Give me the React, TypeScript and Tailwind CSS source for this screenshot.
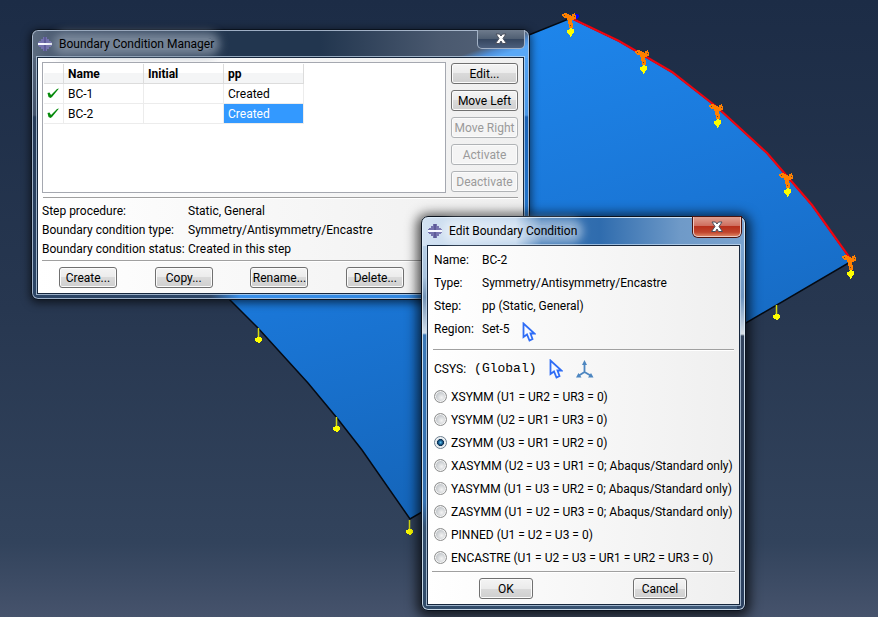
import type { ButtonHTMLAttributes, ReactNode } from "react";

type Point = { x: number; y: number };

const fixedSupports: Point[] = [
  { x: 571, y: 18 },
  { x: 644, y: 55 },
  { x: 718, y: 109 },
  { x: 788, y: 178 },
  { x: 851, y: 260 },
];

const symmetrySupports: Point[] = [
  { x: 258, y: 328 },
  { x: 336, y: 417 },
  { x: 409, y: 520 },
  { x: 776, y: 305 },
];

const conditions = [
  { name: "BC-1", initial: "", step: "Created" },
  { name: "BC-2", initial: "", step: "Created", selected: true },
];

const details = [
  ["Step procedure:", "Static, General"],
  ["Boundary condition type:", "Symmetry/Antisymmetry/Encastre"],
  ["Boundary condition status:", "Created in this step"],
];

const options = [
  "XSYMM (U1 = UR2 = UR3 = 0)",
  "YSYMM (U2 = UR1 = UR3 = 0)",
  "ZSYMM (U3 = UR1 = UR2 = 0)",
  "XASYMM (U2 = U3 = UR1 = 0; Abaqus/Standard only)",
  "YASYMM (U1 = U3 = UR2 = 0; Abaqus/Standard only)",
  "ZASYMM (U1 = U2 = UR3 = 0; Abaqus/Standard only)",
  "PINNED (U1 = U2 = U3 = 0)",
  "ENCASTRE (U1 = U2 = U3 = UR1 = UR2 = UR3 = 0)",
];

function Viewport() {
  return (
    <svg className="absolute top-0 left-0" width="878" height="617" viewBox="0 0 878 617" aria-hidden="true">
      <defs>
        <linearGradient id="face" gradientUnits="userSpaceOnUse" x1="480" y1="30" x2="600" y2="450">
          <stop offset="0" stopColor="#1e86ec" />
          <stop offset="0.5" stopColor="#1a76d6" />
          <stop offset="1" stopColor="#1566bb" />
        </linearGradient>
      </defs>
      <path
        d="M571 18 L619 41 L672 72 L718 108 L767 153 L812 205 L852 261 L410 519 L362 450 L337 418 L308 383 L258 328 L230 300 L120 200 Z"
        fill="url(#face)"
        stroke="#050a12"
        strokeWidth="1.5"
      />
      <path d="M573 19 L619 41 L672 72 L718 108 L767 153 L812 205 L852 261" fill="none" stroke="#f00510" strokeWidth="2.2" />
      {symmetrySupports.map((p) => (
        <g key={p.x} transform={`translate(${p.x} ${p.y})`}>
          <path d="M0.5 0 V12" stroke="#d8dc10" strokeWidth="1.5" />
          <path d="M-1 9 H3 V10 H4 V13 H3 V14 H2 V15 H0 V14 H-2 V13 H-3 V10 H-1 Z" fill="#ffff00" />
        </g>
      ))}
      <path d="M574 14 H577 L579 15 V17 L577 19 H574 Z" fill="#0000ff" />
      {fixedSupports.map((p) => (
        <g key={p.x} transform={`translate(${p.x} ${p.y})`} shapeRendering="crispEdges">
          <path d="M-9 -4 H-7 V-5 H-4 V-4 H-2 V-3 H0 V-2 H1 V-4 H3 V-5 H4 V-3 H5 V1 H3 V2 H1 V5 H2 V10 H-2 V6 H-3 V2 H-4 V0 H-7 V-1 H-8 V-2 H-9 Z" fill="#ff8000" />
          <path d="M-7 -3 H-6 V-2 H-7 Z M3 -2 H4 V-1 H3 Z M-1 7 H0 V8 H-1 Z" fill="#5a4a3a" />
          <path d="M-2 11 H-1 V10 H1 V11 H3 V15 H2 V16 H1 V18 H0 V19 H-1 V17 H-2 V16 H-3 V15 H-4 V12 H-2 Z" fill="#ffff00" />
        </g>
      ))}
    </svg>
  );
}

function AppIcon() {
  return (
    <svg width="16" height="16" viewBox="0 0 16 16" className="shrink-0" aria-hidden="true" shapeRendering="crispEdges">
      <path d="M6 1 H10 V3 H12 V5 H14 V6 H15 V10 H14 V11 H12 V13 H10 V15 H6 V13 H4 V11 H2 V10 H1 V6 H2 V5 H4 V3 H6 Z" fill="#7472ae" />
      <path d="M7 1 H9 V15 H7 Z" fill="#5d5b98" />
      <path d="M1 7 H15 V9 H1 Z" fill="#f6f8ff" />
    </svg>
  );
}

function PointerIcon() {
  return (
    <svg width="14" height="20" viewBox="0 0 14 20" aria-hidden="true">
      <path d="M1.500 1.500 V15 L5 12.500 L7.500 18.500 L10.500 17 L8.500 11.500 H12.500 Z" fill="#f8faff" stroke="#2f6df6" strokeWidth="1.800" />
    </svg>
  );
}

function AxesIcon() {
  return (
    <svg width="18" height="19" viewBox="0 0 18 19" aria-hidden="true">
      <path d="M8.500 4 V12 L3 15.500 M8.500 12 L14.500 15.500" fill="none" stroke="#4d86c0" strokeWidth="1.800" />
      <path d="M8.500 0 L11 5 H6 Z M0 17.500 L2.500 13 L5.500 17.500 Z M17.500 17.500 L15 13 L12 17.500 Z" fill="#4d86c0" />
    </svg>
  );
}

function CheckIcon() {
  return (
    <svg width="13" height="12" viewBox="0 0 13 12" aria-label="Active" role="img">
      <path d="M0.500 5 L2.500 4.500 L4 7 L10 1 L12 0.500 L5 9 L3.500 10 L1.500 9 Z" fill="#068a0c" />
    </svg>
  );
}

function PushButton({ className = "", ...props }: ButtonHTMLAttributes<HTMLButtonElement>) {
  return (
    <button
      type="button"
      className={`flex h-[21px] items-center justify-center rounded-[3px] border border-[#707070] bg-[linear-gradient(#f4f4f4,#ebebeb_50%,#dadada_50%,#cfcfcf)] whitespace-nowrap shadow-[inset_0_0_0_1px_#fbfbfb] disabled:border-[#b0b3b6] disabled:bg-none disabled:bg-[#f4f4f4] disabled:text-[#9a9a9a] ${className}`}
      {...props}
    />
  );
}

function Groove({ className }: { className: string }) {
  return <div className={`h-[2px] border-t border-b border-t-[#a0a0a0] border-b-white ${className}`} />;
}

function CloseButton({ className }: { className: string }) {
  return (
    <button type="button" aria-label="Close" className={`-mr-px flex w-12 items-center justify-center rounded-b-[5px] border border-t-0 ${className}`}>
      <svg width="14" height="12" viewBox="0 0 14 12" aria-hidden="true">
        <path d="M2 1 H5.500 L7 3 L8.500 1 H12 L9 5.500 L12.500 10.500 H8.500 L7 8 L5.500 10.500 H1.500 L5 5.500 Z" fill="#ffffff" stroke="#4a4f5c" strokeWidth="1" />
      </svg>
    </button>
  );
}

type WindowProps = {
  title: string;
  frame: string;
  titleBar: string;
  glow: string;
  close: string;
  children: ReactNode;
};

function Window({ title, frame, titleBar, glow, close, children }: WindowProps) {
  return (
    <section aria-label={title} className={`absolute rounded-[7px] border border-[#0a121e] px-[5px] pb-[5px] ${frame}`}>
      <header className={`flex items-start justify-between ${titleBar}`}>
        <div className="flex h-full items-center gap-[6px]">
          <AppIcon />
          <h1 className={`rounded-lg leading-3 ${glow}`}>{title}</h1>
        </div>
        <CloseButton className={close} />
      </header>
      <div className="border border-[#16263c] bg-[linear-gradient(90deg,#ffffff,#fafafa_30%,#efefef)] shadow-[0_0_0_1px_rgba(200,220,240,0.7)]">
        {children}
      </div>
    </section>
  );
}

function ManagerWindow() {
  return (
    <Window
      title="Boundary Condition Manager"
      frame="top-[29px] left-[31px] w-[499px] shadow-[inset_0_0_0_1px_rgba(190,205,225,0.8),0_2px_8px_1px_rgba(0,0,0,0.6)] [background:linear-gradient(160deg,transparent_87%,#4f8fd8_91%,#5aa8f6_94%)_top/100%_28px_no-repeat,linear-gradient(90deg,#5d6c80,#3c4d66_8%,#22364f_40%,#22364f_58%,#4a596f_82%,#566479)_top/100%_28px_no-repeat,linear-gradient(#5aa8f6,#4a98e8_85px,#1b62b4_87px,#2b86e0)_right/8px_100%_no-repeat,linear-gradient(#5d6c80,#43536b_85px,#263b58_87px,#2c4566)_left/8px_100%_no-repeat,linear-gradient(90deg,#2c4566_36%,#3a90ea_42%,#2b80d8)]"
      titleBar="h-[27px]"
      glow="bg-[#8492a4]/80 shadow-[0_0_8px_6px_rgba(132,146,164,0.8)]"
      close="h-[19px] border-[#a3b2c6] bg-[linear-gradient(#6e7b8c,#4f5e72_50%,#34455e_50%,#4c5f7c)]"
    >
      <div className="flex gap-[5px] pt-1 pr-[5px] pl-1">
        <div className="h-[131px] min-w-0 flex-1 border border-[#a5a8b0] bg-white p-px">
          <table className="w-[260px] table-fixed border-separate border-spacing-0 text-left">
            <colgroup>
              <col className="w-5" />
              <col className="w-20" />
              <col className="w-20" />
              <col className="w-20" />
            </colgroup>
            <thead>
              <tr className="h-5">
                {["", "Name", "Initial", "pp"].map((heading) => (
                  <th key={heading} scope="col" className="border-r border-b border-[#dcdcdc] bg-[linear-gradient(#ffffff_45%,#f4f5f6_45%)] p-0 pl-1 leading-4 font-bold">
                    {heading}
                  </th>
                ))}
              </tr>
            </thead>
            <tbody>
              {conditions.map((row) => (
                <tr key={row.name} className="h-5">
                  <td className="border-r border-b border-[#ececec] p-0 pl-[3px] leading-4"><CheckIcon /></td>
                  <td className="border-r border-b border-[#ececec] p-0 pl-1 leading-4">{row.name}</td>
                  <td className="border-r border-b border-[#ececec] p-0 pl-1 leading-4">{row.initial}</td>
                  <td className={`border-r border-b border-[#ececec] p-0 pl-1 leading-4 ${row.selected ? "bg-[#3399ff] text-white" : ""}`}>{row.step}</td>
                </tr>
              ))}
            </tbody>
          </table>
        </div>
        <div className="flex w-[67px] flex-col gap-[6px] pt-px">
          <PushButton>Edit...</PushButton>
          <PushButton>Move Left</PushButton>
          <PushButton disabled>Move Right</PushButton>
          <PushButton disabled>Activate</PushButton>
          <PushButton disabled>Deactivate</PushButton>
        </div>
      </div>
      <Groove className="mx-[5px] mt-1" />
      <dl className="mt-[3px] grid grid-cols-[146px_1fr] px-1 leading-[19px]">
        {details.map(([label, value]) => (
          <div key={label} className="contents">
            <dt>{label}</dt>
            <dd>{value}</dd>
          </div>
        ))}
      </dl>
      <Groove className="mx-1 mt-px" />
      <div className="grid grid-cols-5 justify-items-center py-[5px] pr-1 pl-[2px]">
        <PushButton className="w-[58px]">Create...</PushButton>
        <PushButton className="w-[58px]">Copy...</PushButton>
        <PushButton className="w-[58px]">Rename...</PushButton>
        <PushButton className="w-[58px]">Delete...</PushButton>
      </div>
    </Window>
  );
}

function EditWindow() {
  return (
    <Window
      title="Edit Boundary Condition"
      frame="top-[216px] left-[421px] w-[325px] shadow-[inset_0_0_0_1px_rgba(225,238,250,0.85),0_2px_12px_4px_rgba(0,0,0,0.7)] [background:linear-gradient(90deg,#d3e2f2,#b9d1ea_29%,#3a75b4_37%,#2f6cae_55%,#6f9ac8_80%,#7aa3cf)_top/100%_29px_no-repeat,linear-gradient(#7aa3cf_30px,#6d94c0_80px,#d8dfe6_117px,#33445e_119px,#2c4160)_right/8px_100%_no-repeat,linear-gradient(#c6d9ed,#a9c3dd_60px,#7393b5_80px,#d2deea_116px,#3b78b6_118px,#3470b0_285px,#34506f_310px,#304a68)_left/8px_100%_no-repeat,linear-gradient(90deg,#304a68,#3f5a7a)]"
      titleBar="h-[28px]"
      glow="bg-white/45 shadow-[0_0_8px_6px_rgba(255,255,255,0.45)]"
      close="h-5 border-[#f0c8c0] bg-[linear-gradient(#e0a090,#cf6f60_45%,#b8301c_50%,#c0442c_80%,#dc8060)] shadow-[0_0_0_1px_#4a1410]"
    >
      <dl className="grid grid-cols-[48px_1fr] px-[6px] pt-[3px] leading-[23px]">
        <dt>Name:</dt>
        <dd>BC-2</dd>
        <dt>Type:</dt>
        <dd>Symmetry/Antisymmetry/Encastre</dd>
        <dt>Step:</dt>
        <dd>pp (Static, General)</dd>
        <dt>Region:</dt>
        <dd className="flex h-[23px] items-start gap-[13px]">
          Set-5
          <button type="button" aria-label="Edit region" className="pt-1">
            <PointerIcon />
          </button>
        </dd>
      </dl>
      <Groove className="mx-[5px] mt-2" />
      <div className="mt-1 flex h-7 items-center px-[6px]">
        <span>CSYS:</span>
        <span className="ml-2 font-['Liberation_Mono',monospace] text-[13px]">(Global)</span>
        <button type="button" aria-label="Select coordinate system" className="ml-3">
          <PointerIcon />
        </button>
        <button type="button" aria-label="Create datum coordinate system" className="ml-[13px]">
          <AxesIcon />
        </button>
      </div>
      <fieldset className="mt-[2px] px-[6px]">
        {options.map((option) => (
          <label key={option} className="flex h-[23px] items-center gap-1 whitespace-nowrap">
            <input
              type="radio"
              name="symmetry"
              defaultChecked={option.startsWith("ZSYMM")}
              className="size-[13px] shrink-0 appearance-none rounded-full border border-[#8e8f8f] bg-[radial-gradient(circle_at_60%_60%,#f4f4f4,#c4c8cc_60%)] shadow-[inset_0_0_0_1px_#f4f4f4] checked:border-[#6d7f90] checked:bg-[radial-gradient(circle,#5cc4f0_0,#1a5f92_25%,#0b2c4c_42%,#dfe8ee_48%)]"
            />
            {option}
          </label>
        ))}
      </fieldset>
      <Groove className="mx-1 mt-[2px]" />
      <div className="grid grid-cols-2 justify-items-center py-[5px] pr-[2px] pl-px">
        <PushButton className="w-[54px]">OK</PushButton>
        <PushButton className="w-[54px]">Cancel</PushButton>
      </div>
    </Window>
  );
}

export default function App() {
  return (
    <main className="relative min-h-screen overflow-hidden bg-[linear-gradient(#1c2c46,#273750_50%,#32435c_88%,#46536c)] font-[Roboto,sans-serif] text-[12px] leading-4 text-black">
      <Viewport />
      <ManagerWindow />
      <EditWindow />
    </main>
  );
}
